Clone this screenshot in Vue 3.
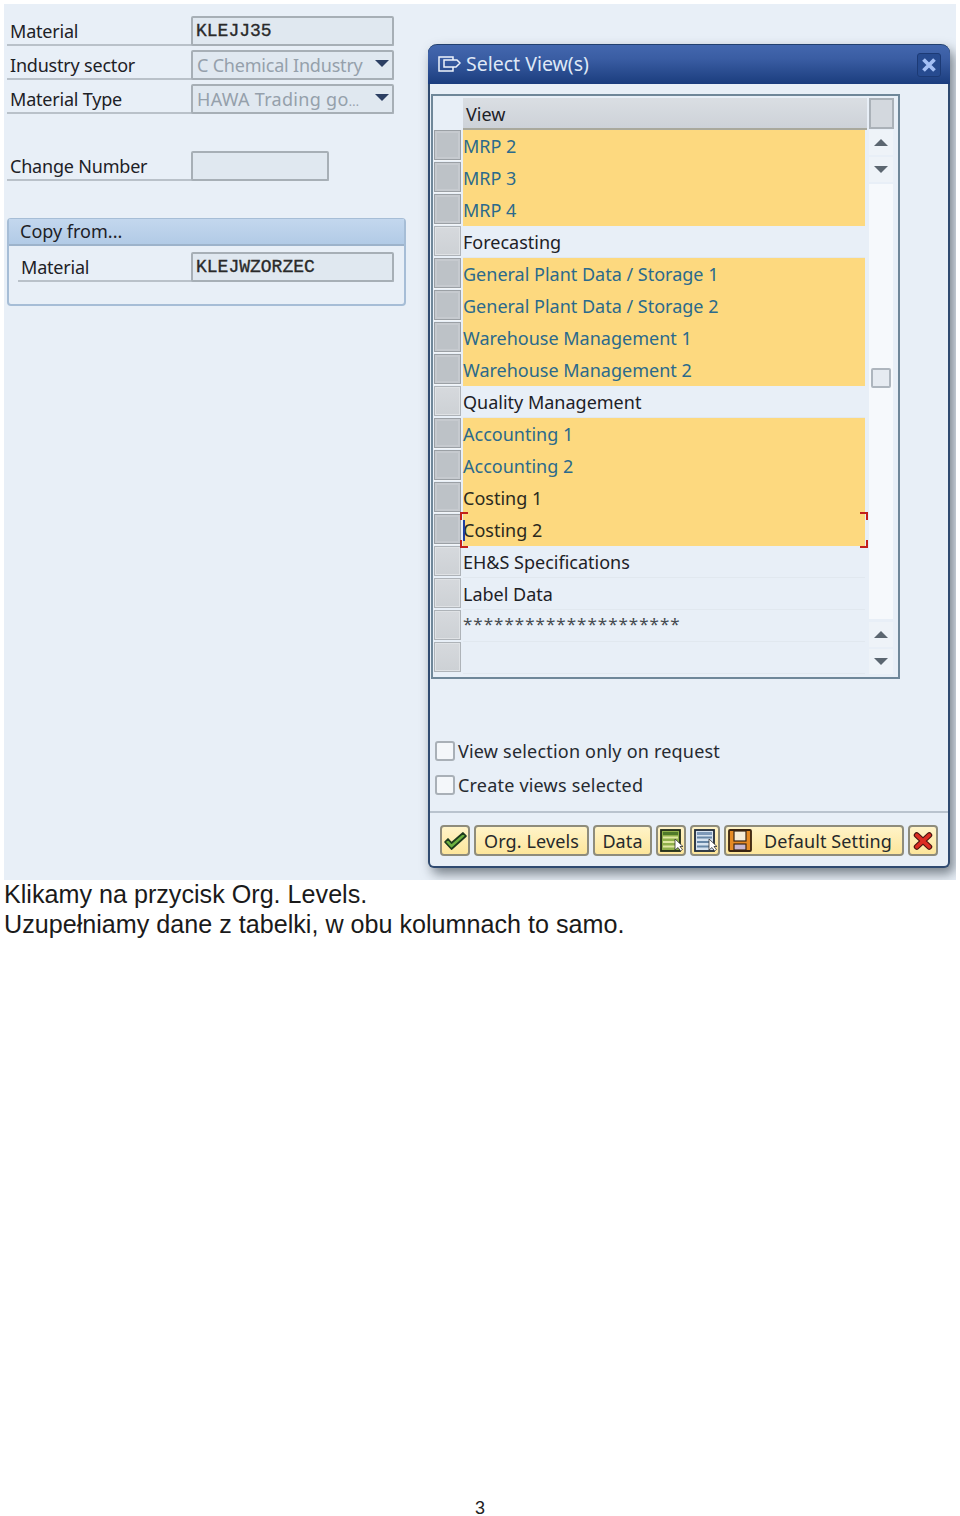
<script setup>
const views = [
  { name: 'MRP 2', sel: true },
  { name: 'MRP 3', sel: true },
  { name: 'MRP 4', sel: true },
  { name: 'Forecasting', sel: false },
  { name: 'General Plant Data / Storage 1', sel: true },
  { name: 'General Plant Data / Storage 2', sel: true },
  { name: 'Warehouse Management 1', sel: true },
  { name: 'Warehouse Management 2', sel: true },
  { name: 'Quality Management', sel: false },
  { name: 'Accounting 1', sel: true },
  { name: 'Accounting 2', sel: true },
  { name: 'Costing 1', sel: true, dark: true },
  { name: 'Costing 2', sel: true, dark: true, focus: true },
  { name: 'EH&S Specifications', sel: false },
  { name: 'Label Data', sel: false },
  { name: '*********************', sel: false, stars: true },
  { name: '', sel: false },
]
</script>

<template>
  <div class="page">
    <div class="shot">
      <div class="left">
        <div class="row">
          <span class="label">Material</span>
          <div class="field mono">KLEJJ35</div>
        </div>
        <div class="row">
          <span class="label">Industry sector</span>
          <div class="field combo">
            <span>C Chemical Industry</span>
            <i class="caret"></i>
          </div>
        </div>
        <div class="row">
          <span class="label">Material Type</span>
          <div class="field combo wide">
            <span>HAWA Trading go<small>...</small></span>
            <i class="caret"></i>
          </div>
        </div>
        <div class="row change">
          <span class="label">Change Number</span>
          <div class="field short"></div>
        </div>
        <div class="group">
          <div class="group-head">Copy from...</div>
          <div class="row inner">
            <span class="label">Material</span>
            <div class="field mono">KLEJWZORZEC</div>
          </div>
        </div>
      </div>

      <div class="dialog">
        <div class="titlebar">
          <svg class="win-icon" width="23" height="16" viewBox="0 0 23 16" fill="none" stroke="#eef3fb" stroke-width="1.500">
            <path d="M15 4V1H1v14h14v-4" />
            <path d="M6 4h13l3 3-4 4H6z" />
          </svg>
          <span class="title">Select View(s)</span>
          <span class="close">
            <svg width="16" height="16" viewBox="0 0 16 16">
              <path d="M2.500 2.500l11 11M13.500 2.500l-11 11" stroke="#a3bff5" stroke-width="3.800" />
            </svg>
          </span>
        </div>

        <div class="table">
          <div class="selectors">
            <div class="corner"></div>
            <div v-for="v in views" :key="v.name" class="sel-cell" :class="{ on: v.sel }"></div>
          </div>
          <div class="cols">
            <div class="col-head">View</div>
            <div v-for="v in views" :key="v.name" class="cell" :class="{ on: v.sel, dark: v.dark, stars: v.stars }">
              <span>{{ v.name }}</span>
              <template v-if="v.focus">
                <i class="br br-l"></i>
                <i class="br br-r"></i>
                <i class="cursor"></i>
              </template>
            </div>
          </div>
          <div class="scroll">
            <div class="scroll-corner"></div>
            <div class="sb-btn"><i class="up"></i></div>
            <div class="sb-btn"><i class="down"></i></div>
            <div class="track"><div class="thumb"></div></div>
            <div class="sb-btn"><i class="up"></i></div>
            <div class="sb-btn"><i class="down"></i></div>
          </div>
        </div>

        <div class="checks">
          <label class="check"><i class="box"></i>View selection only on request</label>
          <label class="check"><i class="box"></i>Create views selected</label>
        </div>

        <div class="toolbar">
          <button class="btn ico">
            <svg width="26" height="22" viewBox="0 0 26 22">
              <path d="M3 12l3-3 3.500 4L21 3l3 3L9.500 19z" fill="#6cb040" stroke="#1c3a1c" stroke-width="1.700" stroke-linejoin="round" />
            </svg>
          </button>
          <button class="btn org">Org. Levels</button>
          <button class="btn data">Data</button>
          <button class="btn ico">
            <svg width="26" height="25" viewBox="0 0 26 25">
              <rect x="3" y="2" width="19" height="21" fill="#8fb04a" stroke="#1f2a18" stroke-width="1.800" />
              <path d="M5 4h15v3H5z" fill="#4f7a2a" />
              <path d="M5 9.500h15M5 14h15M5 18.500h15" stroke="#dfe8a0" stroke-width="1.800" />
              <path d="M17 11v11l3-2.500 2.500 3.500 2-1.500-2.500-3H25z" fill="#fff" stroke="#333" stroke-width=".8" />
            </svg>
          </button>
          <button class="btn ico">
            <svg width="26" height="25" viewBox="0 0 26 25">
              <rect x="3" y="2" width="19" height="21" fill="#d5e2ef" stroke="#1f2a38" stroke-width="1.800" />
              <path d="M5 4h15v3H5z" fill="#7d99b8" />
              <path d="M5 9.500h15M5 14h15M5 18.500h15" stroke="#6686a6" stroke-width="1.800" />
              <path d="M17 11v11l3-2.500 2.500 3.500 2-1.500-2.500-3H25z" fill="#fff" stroke="#333" stroke-width=".8" />
            </svg>
          </button>
          <button class="btn def">
            <svg width="26" height="25" viewBox="0 0 26 25">
              <rect x="2" y="2" width="22" height="21" rx="1" fill="#e58a24" stroke="#3a2410" stroke-width="1.800" />
              <rect x="7" y="3" width="12" height="10" fill="#f6ecd6" stroke="#3a2410" stroke-width="1.200" />
              <rect x="7" y="16" width="12" height="6" fill="#c7b6cf" stroke="#3a2410" stroke-width="1.200" />
            </svg>
            <span>Default Setting</span>
          </button>
          <button class="btn ico">
            <svg width="20" height="18" viewBox="0 0 22 20">
              <path d="M4 3.500l14 13M18 3.500l-14 13" stroke="#4a1410" stroke-width="6.500" stroke-linecap="round" />
              <path d="M4 3.500l14 13M18 3.500l-14 13" stroke="#dc2c22" stroke-width="4" stroke-linecap="round" />
            </svg>
          </button>
        </div>
      </div>
    </div>

    <p class="note">Klikamy na przycisk Org. Levels.<br>Uzupełniamy dane z tabelki, w obu kolumnach to samo.</p>
    <div class="page-no">3</div>
  </div>
</template>

<style>
html, body {
  margin: 0;
  background: #fff;
}
</style>

<style scoped>
.page {
  height: 1516px;
  overflow: hidden;
  display: flex;
  flex-direction: column;
  font-family: "Liberation Sans", Arial, sans-serif;
  padding-top: 4px;
  box-sizing: border-box;
}

.shot {
  margin: 0 4px;
  height: 876px;
  flex: none;
  overflow: hidden;
  background: #e8eff7;
  display: flex;
  box-sizing: border-box;
  font-family: "Noto Sans", sans-serif;
  font-size: 18px;
  color: #1d2126;
}

.left {
  width: 399px;
  margin-left: 3px;
  padding-top: 12px;
  flex: none;
}

.row {
  margin-bottom: 4px;
  display: flex;
  align-items: center;
  border-bottom: 2px solid #b9c1c9;
  width: 387px;
  height: 28px;
}

.label {
  width: 184px;
  padding-left: 3px;
  box-sizing: border-box;
  flex: none;
  padding-top: 1px;
  letter-spacing: -0.2px;
}

.field {
  width: 203px;
  height: 30px;
  margin-bottom: -2px;
  box-sizing: border-box;
  border: 2px solid #a7afb6;
  border-radius: 2px;
  background: #e0e8f0;
  padding-left: 3px;
  display: flex;
  align-items: center;
}

.mono {
  font-family: "Liberation Mono", monospace;
  font-size: 18px;
  -webkit-text-stroke: 0.35px #2a2a2a;
  color: #2a2a2a;
}

.combo {
  color: #95a0ab;
  justify-content: space-between;
  padding-left: 4px;
  padding-right: 3px;
  white-space: nowrap;
  letter-spacing: -0.2px;
}

.combo.wide {
  letter-spacing: 0.3px;
}

.combo small {
  font-size: 12px;
}

.caret {
  width: 0;
  height: 0;
  margin-top: -3px;
  border-left: 7px solid transparent;
  border-right: 7px solid transparent;
  border-top: 7px solid #2c3f63;
}

.change {
  margin-top: 37px;
  width: 322px;
}

.short {
  width: 138px;
}

.group {
  margin-top: 37px;
  height: 88px;
  box-sizing: border-box;
  border: 2px solid #a6bdd6;
  border-radius: 4px;
  background: #e8eff7;
}

.group-head {
  height: 25px;
  margin: -1px 0 0;
  background: linear-gradient(#c3d7ee, #b2cbe6);
  border-bottom: 2px solid #9db3cb;
  padding-left: 11px;
  line-height: 24px;
}

.inner {
  width: 376px;
  margin: 6px 0 0 9px;
}

.inner .label {
  width: 173px;
}

.dialog {
  width: 522px;
  height: 824px;
  margin: 40px 0 0 22px;
  box-sizing: border-box;
  border: 2px solid #2f4a70;
  border-top: none;
  border-radius: 9px 9px 6px 6px;
  background: #e8eff7;
  box-shadow: 4px 6px 12px rgba(60, 70, 80, 0.65);
  flex: none;
}

.titlebar {
  height: 40px;
  margin: 0 -2px;
  border-radius: 9px 9px 0 0;
  background: linear-gradient(#4367ae, #3a5da3 35%, #1b3d7e);
  border-top: 1px solid #22406e;
  box-sizing: border-box;
  display: flex;
  align-items: center;
  padding: 0 9px 2px 10px;
  color: #dfe8f6;
}

.win-icon {
  margin-right: 5px;
}

.title {
  flex: 1;
  font-size: 19.500px;
}

.close {
  width: 24px;
  height: 24px;
  border-radius: 3px;
  background: #274b90;
  border: 1px solid #1c3a75;
  box-sizing: border-box;
  display: flex;
  align-items: center;
  justify-content: center;
  margin-top: 2px;
}

.table {
  margin: 10px 0 0 1px;
  width: 469px;
  height: 585px;
  box-sizing: border-box;
  border: 2px solid #6f8799;
  background: #e8eff7;
  display: flex;
  padding: 2px 0 0 1px;
}

.selectors {
  width: 29px;
  flex: none;
}

.corner {
  height: 32px;
}

.sel-cell {
  width: 27px;
  height: 30px;
  margin-bottom: 2px;
  background: linear-gradient(#d6d9dd, #cdd1d5);
  border: 1px solid #aeb3b8;
  box-sizing: border-box;
  box-shadow: inset 0 0 0 1px #dfe2e5;
}

.sel-cell.on {
  background: #bdc2c7;
  border-color: #9ba0a5;
  box-shadow: inset 0 0 0 2px #c6cacf, 0 1px 0 #f2f5f8;
}

.cols {
  width: 406px;
  flex: none;
}

.col-head {
  height: 32px;
  line-height: 32px;
  padding-left: 3px;
  background: linear-gradient(#dadee3, #cdd2d8);
  border-bottom: 2px solid #a9a99d;
  box-sizing: border-box;
  margin-right: 2px;
}

.cell {
  position: relative;
  width: 402px;
  height: 32px;
  line-height: 32px;
  border-bottom: 1px solid #e1e8ef;
  box-sizing: border-box;
  white-space: nowrap;
}

.cell.on {
  background: #fdd97f;
  border-bottom: none;
  color: #2b6a8c;
}

.cell.dark {
  color: #2b2a20;
}

.cell.stars {
  color: #454b50;
  line-height: 27px;
  letter-spacing: 1px;
  font-size: 17px;
}

.br {
  position: absolute;
  top: -2px;
  width: 8px;
  height: 36px;
  border: 2px solid #c2201c;
  box-sizing: border-box;
  -webkit-mask: linear-gradient(#000 0 8px, transparent 8px 28px, #000 28px);
  mask: linear-gradient(#000 0 8px, transparent 8px 28px, #000 28px);
}

.br-l {
  left: -3px;
  border-right: none;
}

.br-r {
  right: -3px;
  border-left: none;
}

.cursor {
  position: absolute;
  left: 0;
  top: 6px;
  width: 2px;
  height: 21px;
  background: #1f3fa0;
}

.scroll {
  width: 27px;
  flex: none;
  display: flex;
  flex-direction: column;
  align-items: flex-start;
}

.scroll-corner {
  width: 25px;
  height: 31px;
  box-sizing: border-box;
  border: 2px solid #aab1b8;
  background: #d3d8de;
  margin-bottom: 1px;
}

.sb-btn {
  width: 24px;
  height: 25px;
  margin-bottom: 2px;
  background: #eef3f8;
  display: flex;
  align-items: center;
  justify-content: center;
}

.up, .down {
  width: 0;
  height: 0;
  border-left: 7px solid transparent;
  border-right: 7px solid transparent;
}

.up {
  border-bottom: 7px solid #5b6670;
}

.down {
  border-top: 7px solid #5b6670;
}

.track {
  width: 24px;
  height: 435px;
  margin-bottom: 3px;
  background: #f6f9fc;
  padding-top: 184px;
  box-sizing: border-box;
}

.thumb {
  width: 20px;
  height: 20px;
  margin-left: 2px;
  box-sizing: border-box;
  border: 2px solid #aeb6be;
  border-radius: 2px;
  background: #e6ebf1;
}

.checks {
  margin: 55px 0 0 5px;
}

.check {
  display: flex;
  align-items: center;
  height: 34px;
  color: #262a30;
  letter-spacing: 0.2px;
}

.box {
  width: 20px;
  height: 20px;
  box-sizing: border-box;
  border: 2px solid #a9b0b7;
  border-radius: 3px;
  background: #f4f7fa;
  margin-right: 3px;
}

.toolbar {
  margin-top: 9px;
  border-top: 2px solid #b9c3ce;
  padding: 12px 0 0 10px;
  display: flex;
  gap: 4px;
}

.btn {
  height: 31px;
  padding: 0;
  box-sizing: border-box;
  border: 2px solid #8e8c7c;
  border-radius: 4px;
  background: linear-gradient(#fff3c8, #fde69b);
  font: inherit;
  letter-spacing: 0.1px;
  color: #26292b;
  display: flex;
  align-items: center;
  justify-content: center;
}

.ico {
  width: 30px;
}

.org {
  width: 115px;
}

.data {
  width: 59px;
}

.def {
  width: 180px;
  justify-content: flex-start;
  padding-left: 1px;
}

.def span {
  margin-left: 11px;
}

.note {
  margin: 0 0 0 4px;
  flex: none;
  font-size: 25.150px;
  line-height: 29.500px;
  color: #1a1a1a;
}

.page-no {
  margin-top: auto;
  text-align: center;
  font-size: 18px;
  line-height: 16px;
  color: #222;
}
</style>
